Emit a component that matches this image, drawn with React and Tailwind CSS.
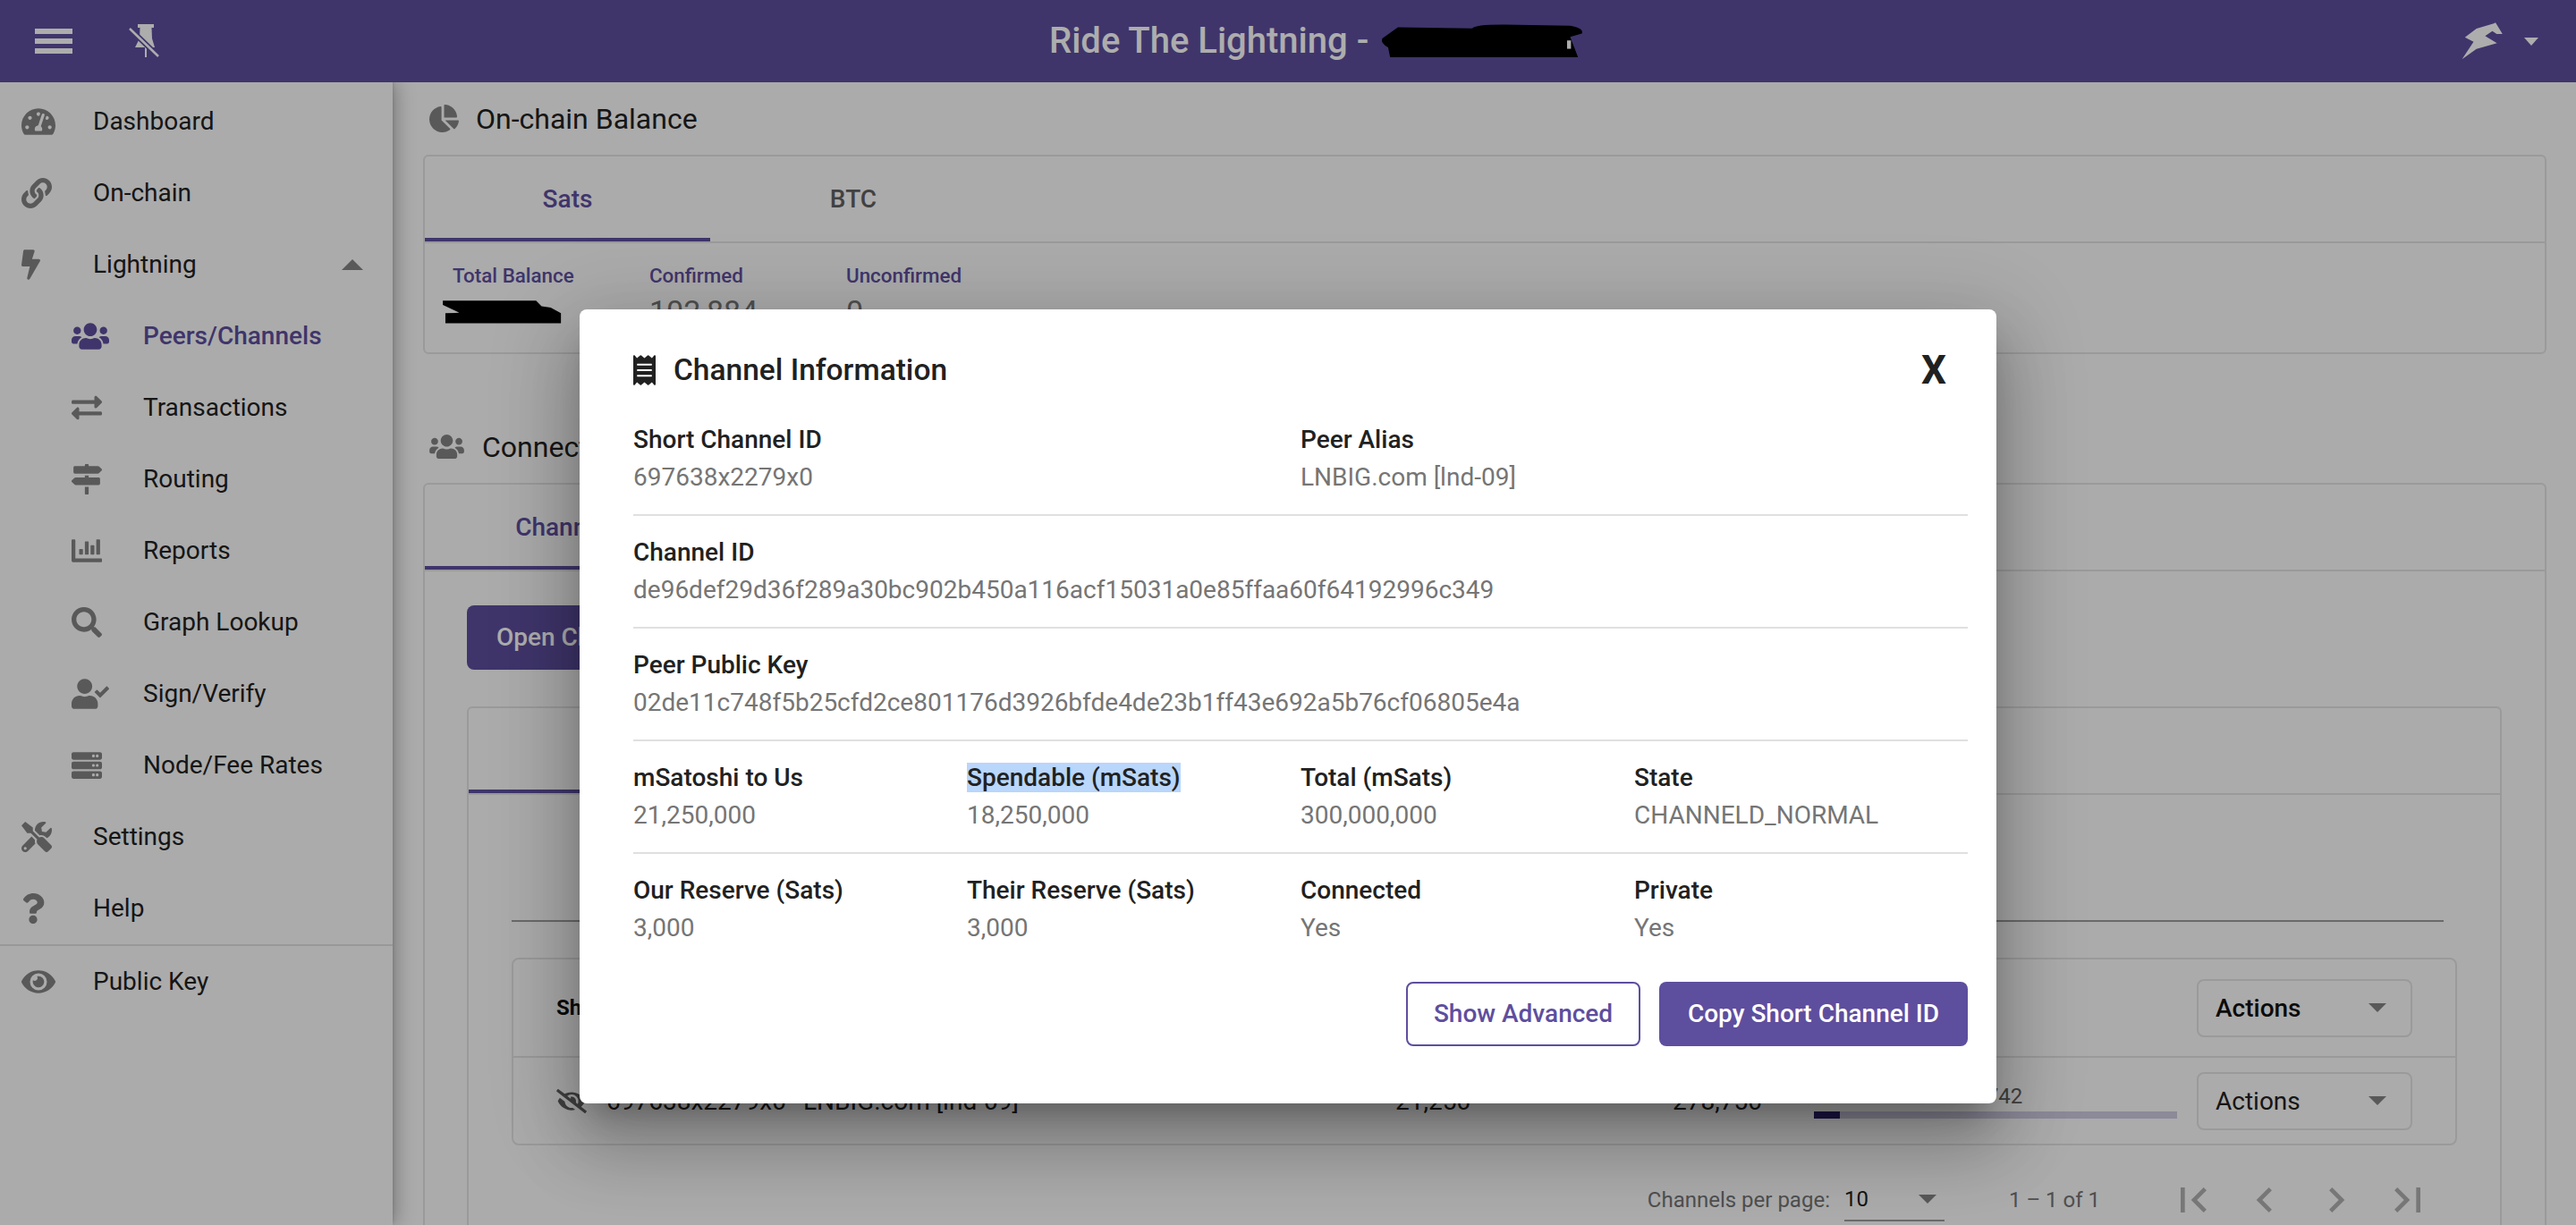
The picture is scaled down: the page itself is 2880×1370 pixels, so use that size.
import React from "react";
import {
  FaBolt,
  FaChartBar,
  FaChartPie,
  FaEye,
  FaEyeSlash,
  FaExchangeAlt,
  FaLink,
  FaMapSigns,
  FaQuestion,
  FaReceipt,
  FaSearch,
  FaServer,
  FaTachometerAlt,
  FaTools,
  FaUserCheck,
  FaUsers,
} from "react-icons/fa";

const menuTop = [
  { label: "Dashboard", icon: FaTachometerAlt, iconWidth: "w-[38px]" },
  { label: "On-chain", icon: FaLink, iconWidth: "w-[34px]" },
  { label: "Lightning", icon: FaBolt, iconWidth: "w-[21px]", open: true },
];

const menuSub = [
  { label: "Peers/Channels", icon: FaUsers, iconWidth: "w-[42px]", active: true },
  { label: "Transactions", icon: FaExchangeAlt, iconWidth: "w-[34px]" },
  { label: "Routing", icon: FaMapSigns, iconWidth: "w-[34px]" },
  { label: "Reports", icon: FaChartBar, iconWidth: "w-[34px]" },
  { label: "Graph Lookup", icon: FaSearch, iconWidth: "w-[34px]" },
  { label: "Sign/Verify", icon: FaUserCheck, iconWidth: "w-[42px]" },
  { label: "Node/Fee Rates", icon: FaServer, iconWidth: "w-[34px]" },
];

const menuBottom = [
  { label: "Settings", icon: FaTools, iconWidth: "w-[34px]" },
  { label: "Help", icon: FaQuestion, iconWidth: "w-[26px]" },
];

function MenuItem({ item, sub }) {
  const Icon = item.icon;
  return (
    <div className={`flex h-[80px] items-center ${sub ? "pl-[80px]" : "pl-[24px]"}`}>
      <div className="w-[80px]">
        <Icon className={`h-[34px] ${item.iconWidth} ${item.active ? "text-[#5e4e9e]" : "text-[#848484]"}`} />
      </div>
      <span className={item.active ? "font-medium text-[#5e4e9e]" : "text-[#212121]"}>{item.label}</span>
      {item.open && (
        <div className="ml-[162px] h-0 w-0 border-x-[12px] border-b-[12px] border-x-transparent border-b-[#848484]" />
      )}
    </div>
  );
}

function Sidebar() {
  return (
    <aside className="h-[1278px] w-[439px] shrink-0 bg-[#fcfcfc] pt-[4px] text-[28px] shadow-[4px_0_20px_rgba(0,0,0,0.28),0_-2px_4px_rgba(0,0,0,0.2)]">
      {menuTop.map((item) => (
        <MenuItem key={item.label} item={item} />
      ))}
      {menuSub.map((item) => (
        <MenuItem key={item.label} item={item} sub />
      ))}
      {menuBottom.map((item) => (
        <MenuItem key={item.label} item={item} />
      ))}
      <div className="border-t-2 border-[#e0e0e0]">
        <MenuItem item={{ label: "Public Key", icon: FaEye, iconWidth: "w-[38px]" }} />
      </div>
    </aside>
  );
}

function Header() {
  return (
    <header className="relative z-10 flex h-[92px] shrink-0 items-center bg-[#5e4e9e] text-white">
      <svg width="42" height="28" viewBox="0 0 42 28" className="ml-[39px] fill-white">
        <rect width="42" height="6" />
        <rect y="11" width="42" height="6" />
        <rect y="22" width="42" height="6" />
      </svg>
      <svg width="36" height="40" viewBox="0 0 36 40" className="ml-[62px]">
        <path d="M11 1H29V5H26.5L27 17L30 27H21V38H19V27H8L13 17L13.5 5H11Z" fill="#fff" />
        <path d="M2 6L34 37" stroke="#5e4e9e" strokeWidth="6" />
        <path d="M2 6L34 37" stroke="#fff" strokeWidth="2.5" />
      </svg>
      <div className="ml-[994px] flex items-center">
        <span className="whitespace-pre text-[40px] font-medium">Ride The Lightning - </span>
        <svg width="232" height="42" viewBox="980 60 530 135" preserveAspectRatio="none" className="ml-[1px]">
          <path d="M1030 78L1220 82Q1225 68 1300 68L1470 72Q1505 80 1500 100L1470 112L1490 185L1010 185L1005 150Q985 135 990 118Z" fill="#000" />
          <rect x="1462" y="125" width="10" height="30" fill="#fff" />
        </svg>
      </div>
      <svg width="47" height="42" viewBox="450 78 142 130" className="ml-[979px] fill-white">
        <path d="M450 206L490 145L460 130L500 100L560 82L566 79L590 118L570 118L555 108L530 125L571 150L500 170Z" />
      </svg>
      <div className="ml-[23px] h-0 w-0 border-x-[8px] border-t-[9px] border-x-transparent border-t-white" />
    </header>
  );
}

function Tabs({ first, second }) {
  return (
    <div className="flex h-[97px] border-b-2 border-[#e4e4e4] text-[28px] font-medium">
      <div className="flex w-[319px] items-center justify-center border-b-[4px] border-[#5e4e9e] pt-[4px] text-[#5e4e9e]">
        {first}
      </div>
      {second && <div className="flex w-[320px] items-center justify-center text-[#616161]">{second}</div>}
    </div>
  );
}

function Balance({ label, value, className }) {
  return (
    <div className={className}>
      <div className="text-[22.4px] leading-[36px] font-medium text-[#5e4e9e]">{label}</div>
      {value}
    </div>
  );
}

function Caret() {
  return <div className="h-0 w-0 border-x-[10px] border-t-[10px] border-x-transparent border-t-[#848484]" />;
}

function ActionsBox({ bold }) {
  return (
    <div className="flex h-[65px] w-[241px] shrink-0 items-center justify-between rounded-[8px] border-2 border-[#e4e4e4] pr-[27px] pl-[19px] text-[28px]">
      <span className={`pt-[2px] ${bold ? "font-medium text-[#111]" : "text-[#212121]"}`}>Actions</span>
      <Caret />
    </div>
  );
}

function ChannelRow({ children, className }) {
  return <div className={`flex items-center px-[48px] ${className}`}>{children}</div>;
}

function Pager() {
  const icons = [
    "M18.41 16.59L13.82 12l4.59-4.59L17 6l-6 6 6 6zM6 6h2v12H6z",
    "M15.41 7.41L14 6l-6 6 6 6 1.41-1.41L10.83 12z",
    "M10 6L8.59 7.41 13.17 12l-4.58 4.59L10 18l6-6z",
    "M5.59 7.41L10.18 12l-4.59 4.59L7 18l6-6-6-6zM16 6h2v12h-2z",
  ];
  return (
    <div className="flex h-[122px] items-center justify-end pr-[27px] text-[24px] text-[#757575]">
      <span>Channels per page:</span>
      <div className="relative ml-[16px] flex h-[48px] w-[112px] items-center justify-between border-b-2 border-[#9d9d9d] pr-[9px] text-[#212121]">
        <span>10</span>
        <Caret />
      </div>
      <span className="mr-[76px] ml-[72px]">1 – 1 of 1</span>
      <div className="flex gap-[24px]">
        {icons.map((d) => (
          <svg key={d} width="56" height="56" viewBox="0 0 24 24" fill="#b0b0b0">
            <path d={d} />
          </svg>
        ))}
      </div>
    </div>
  );
}

function MainContent() {
  return (
    <main className="min-w-0 flex-1 pr-[33px] pl-[34px] text-[#212121]">
      <div className="flex h-[81px] items-center pl-[7px] text-[32px]">
        <FaChartPie className="mr-[19px] h-[31px] w-[33px] text-[#848484]" />
        <span>On-chain Balance</span>
      </div>
      <section className="h-[223px] rounded-[6px] border-2 border-[#e4e4e4]">
        <Tabs first="Sats" second="BTC" />
        <div className="flex pt-[18px] pl-[31px]">
          <Balance
            label="Total Balance"
            className="w-[220px]"
            value={
              <svg width="139" height="30" viewBox="1165 995 340 95" preserveAspectRatio="none" className="mt-[7px] -ml-[15px]">
                <path d="M1175 1005L1430 1005L1445 1025L1470 1030L1498 1050L1498 1085L1182 1085L1182 1050L1220 1048L1175 1020Z" fill="#000" />
              </svg>
            }
          />
          <Balance
            label="Confirmed"
            className="w-[220px]"
            value={<div className="text-[34px] leading-[44px] text-[#757575]">102,884</div>}
          />
          <Balance label="Unconfirmed" value={<div className="text-[34px] leading-[44px] text-[#757575]">0</div>} />
        </div>
      </section>

      <div className="mt-[63px] flex h-[81px] items-center pl-[7px] text-[32px]">
        <FaUsers className="mr-[20px] h-[31px] w-[39px] text-[#848484]" />
        <span>Connections</span>
      </div>
      <section className="rounded-[6px] border-2 border-b-0 border-[#e4e4e4]">
        <Tabs first="Channels" />
        <div className="pt-[38px] pr-[48px] pl-[47px]">
          <div className="flex h-[72px] w-[300px] items-center rounded-[8px] bg-[#5e4e9e] pl-[33px] text-[28px] font-medium text-white">
            Open Channel
          </div>
          <div className="mt-[41px] rounded-[6px] border-2 border-b-0 border-[#e4e4e4]">
            <Tabs first="Open" />
            <div className="px-[48px]">
              <div className="mr-[15px] h-[142px] border-b-2 border-[#9d9d9d]" />
              <div className="mt-[40px] h-[210px] rounded-[8px] border-2 border-[#e4e4e4] text-[28px]">
                <ChannelRow className="h-[110px] border-b-2 border-[#e4e4e4]">
                  <span className="w-[1834px] text-[24px] font-bold text-[#111]">Short Channel ID</span>
                  <ActionsBox bold />
                </ChannelRow>
                <ChannelRow className="h-[96px]">
                  <FaEyeSlash className="mr-[22px] h-[27px] w-[34px] text-[#616161]" />
                  <span className="w-[220px] pt-[2px]">697638x2279x0</span>
                  <span className="w-[662px] pt-[2px]">LNBIG.com [lnd-09]</span>
                  <span className="w-[310px] pt-[2px]">21,250</span>
                  <span className="w-[158px] pt-[2px]">278,750</span>
                  <div className="w-[428px]">
                    <div className="w-[406px] text-center text-[24px] leading-[30px] text-[#616161]">6.742</div>
                    <div className="mt-[2px] h-[8px] w-[406px] bg-[#cfcbe2]">
                      <div className="h-full w-[29px] bg-[#2a2068]" />
                    </div>
                  </div>
                  <ActionsBox />
                </ChannelRow>
              </div>
              <Pager />
            </div>
          </div>
        </div>
      </section>
    </main>
  );
}

function Info({ label, value, selected }) {
  return (
    <div>
      <div className="text-[28px] leading-[42px] font-medium text-[#212121]">
        <span className={selected ? "bg-[#b9d6fb]" : ""}>{label}</span>
      </div>
      <div className="text-[28px] leading-[42px] text-[#757575]">{value}</div>
    </div>
  );
}

function ChannelDialog() {
  return (
    <div className="h-[888px] w-[1584px] rounded-[8px] bg-white pt-[30px] pr-[32px] pl-[60px] shadow-[0_22px_30px_-14px_rgba(0,0,0,0.25),0_48px_76px_6px_rgba(0,0,0,0.18),0_18px_92px_16px_rgba(0,0,0,0.15)]">
      <div className="flex h-[75px] items-center justify-between pr-[24px]">
        <div className="flex items-center text-[33.5px] font-medium text-[#212121]">
          <FaReceipt className="mr-[20px] h-[34px] w-[25px]" />
          <span className="pt-[2px]">Channel Information</span>
        </div>
        <span className="text-[44px] font-bold text-[#212121]">X</span>
      </div>
      <div className="grid grid-cols-4 border-b-2 border-[#e0e0e0] py-[20px]">
        <Info label="Short Channel ID" value="697638x2279x0" />
        <div className="col-span-1" />
        <Info label="Peer Alias" value="LNBIG.com [lnd-09]" />
      </div>
      <div className="border-b-2 border-[#e0e0e0] py-[20px]">
        <Info label="Channel ID" value="de96def29d36f289a30bc902b450a116acf15031a0e85ffaa60f64192996c349" />
      </div>
      <div className="border-b-2 border-[#e0e0e0] py-[20px]">
        <Info label="Peer Public Key" value="02de11c748f5b25cfd2ce801176d3926bfde4de23b1ff43e692a5b76cf06805e4a" />
      </div>
      <div className="grid grid-cols-4 border-b-2 border-[#e0e0e0] py-[20px]">
        <Info label="mSatoshi to Us" value="21,250,000" />
        <Info label="Spendable (mSats)" value="18,250,000" selected />
        <Info label="Total (mSats)" value="300,000,000" />
        <Info label="State" value="CHANNELD_NORMAL" />
      </div>
      <div className="grid grid-cols-4 py-[20px]">
        <Info label="Our Reserve (Sats)" value="3,000" />
        <Info label="Their Reserve (Sats)" value="3,000" />
        <Info label="Connected" value="Yes" />
        <Info label="Private" value="Yes" />
      </div>
      <div className="mt-[19px] flex justify-end gap-[21px] text-[28px] font-medium">
        <button className="flex h-[72px] w-[262px] items-center justify-center rounded-[8px] border-2 border-[#5e4e9e] text-[#5e4e9e]">
          Show Advanced
        </button>
        <button className="flex h-[72px] w-[345px] items-center justify-center rounded-[8px] bg-[#5e4e9e] text-white">
          Copy Short Channel ID
        </button>
      </div>
    </div>
  );
}

export default function App() {
  return (
    <div className="relative flex h-[1370px] w-[2880px] flex-col overflow-hidden bg-[#fcfcfc] font-[Roboto,sans-serif]">
      <Header />
      <div className="flex min-h-0 flex-1">
        <Sidebar />
        <MainContent />
      </div>
      <div className="absolute inset-0 z-20 flex justify-center bg-black/32 pt-[346px]">
        <ChannelDialog />
      </div>
    </div>
  );
}
